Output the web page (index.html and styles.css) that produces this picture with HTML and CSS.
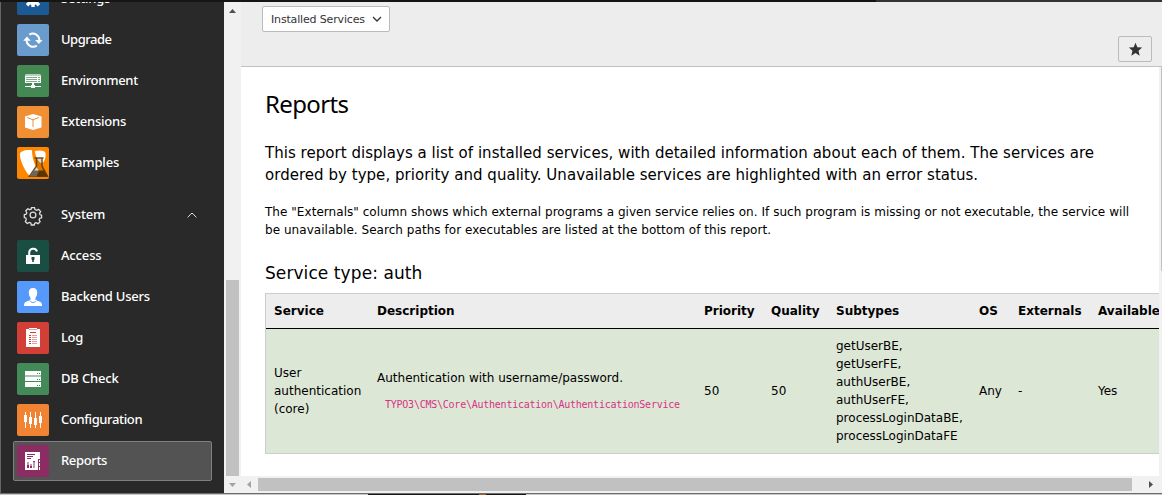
FILE: index.html
```html
<!DOCTYPE html>
<html lang="en">
<head>
<meta charset="utf-8">
<title>Reports</title>
<link rel="stylesheet" href="styles.css">
</head>
<body>
<div class="app">
  <div class="topstrip"><span></span></div>
  <div class="frame">
    <nav class="menu">
      <a class="item"><svg class="icon" style="background:#1b5a95" viewBox="0 0 32 32"><g fill="#fff"><circle cx="16" cy="16.500" r="5.600"/><path d="M14.300 8h3.400v16h-3.400zM8 14.800h16v3.400H8zM11.400 9.300l11.800 11.800-2.400 2.400L9 11.700zM20.600 9.300l2.400 2.400L11.200 23.500l-2.400-2.400z"/></g><circle cx="16" cy="16" r="2.500" fill="#1b5a95"/></svg><span class="t-settings">Settings</span></a>
      <a class="item"><svg class="icon" style="background:#6a9bcd" viewBox="0 0 32 32"><g fill="none" stroke="#fff" stroke-width="2"><path d="M12.300 10.600A6.600 6.600 0 0 1 22.400 16"/><path d="M19.800 21.700A6.600 6.600 0 0 1 9.600 16.500"/></g><path d="M18 16h7.600l-3.800 4zM6.200 16.800h7.600l-3.800-4.200z" fill="#fff"/></svg><span class="t-upgrade">Upgrade</span></a>
      <a class="item"><svg class="icon" style="background:#448854" viewBox="0 0 32 32"><path d="M9 9h14l1 1v1H8v-1z" fill="#b4cfba"/><path d="M8 11h16v7H8zM15 18h2v2h1v1h6v1h-6v1h-4v-1H8v-1h6v-1h1z" fill="#fff"/><path d="M9 12.500h11M9 14.500h11M9 16.500h11M21 12.500h2M21 14.500h2M21 16.500h2" stroke="#448854" stroke-width=".7"/></svg><span class="t-environment">Environment</span></a>
      <a class="item"><svg class="icon" style="background:#f18f35" viewBox="0 0 32 32"><path d="M16 8l8.500 2.500v11L16 24l-8-2.500v-11z" fill="#fff"/><path d="M10 11.500l6 2.300 6-2.300M16 13.800V21" fill="none" stroke="#f18f35"/></svg><span class="t-extensions">Extensions</span></a>
      <a class="item"><svg class="icon" style="background:#ff8700" viewBox="0 0 32 32"><path d="M5 4.500C8 3 12 2.700 15 3.300c0 8 3 16 6.500 19.500-1 3-5 6.700-7 6.700C10 29 3 14 3 8c0-2 .5-3 2-3.500z" fill="#fff"/><path d="M18 4c4-1 10-.8 10.500 2 .7 5-1.500 10-4 10-3 0-6.500-7-6.500-12z" fill="#fff"/><path d="M19.500 11h5v8l6 10H12.500l7-10z" fill="#593500" fill-opacity=".2"/><path d="M17.500 11h9M19.500 11v8L12.500 29.200h18l-5.500-10V11" fill="none" stroke="#593500" stroke-opacity=".85" stroke-width="1.500"/><path d="M16.500 23.500H22l-1.500 6h-8z" fill="#6e6659"/><path d="M22 23.500h5l3.500 6h-11z" fill="#593500"/></svg><span class="t-examples">Examples</span></a>
      <a class="item group"><svg class="icon" viewBox="0 0 32 32" fill="none" stroke="#ddd" stroke-width="1.300"><circle cx="16" cy="16" r="2.900"/><path d="M14.500 8.600h3l.5 2 1.500.7 2-1 2.100 2.200-1.100 1.900.6 1.400 1.500.4v2.600l-1.900.6-.6 1.500 1 1.800-2 2-1.900-1-1.500.6-.5 1.700h-2.900l-.5-1.900-1.500-.6-2 1-2-2 1-2-.5-1.500-1.500-.5v-2.800l1.900-.5.6-1.500-1-2 2-2 2 1 1.500-.6z"/></svg><span class="t-system">System</span><svg class="chevron" viewBox="0 0 10 6"><path d="M.6 5.300 5 1l4.400 4.300" fill="none" stroke="#ddd"/></svg></a>
      <a class="item"><svg class="icon" style="background:#194e42" viewBox="0 0 32 32"><path d="M12.200 15v-2.500a4 4 0 0 1 7.800-1" fill="none" stroke="#fff" stroke-width="2"/><path d="M9 15h14v9H9z" fill="#fff"/><path d="M14.500 17h3v2.500l-.7.500v2h-1.600v-2l-.7-.5z" fill="#194e42"/></svg><span class="t-access">Access</span></a>
      <a class="item"><svg class="icon" style="background:#5599fc" viewBox="0 0 32 32"><path d="M16 7c3 0 4.500 2 4.200 5-.1 2-.8 3.500-1.700 4.500V19l5 2c1 .4 1.500 2 1.500 4H7c0-2 .5-3.600 1.500-4l5-2v-2.500c-.9-1-1.600-2.500-1.700-4.500C11.500 9 13 7 16 7z" fill="#fff"/><path d="M13.200 20c1 2 4.600 2 5.600 0" fill="none" stroke="#5599fc" stroke-width="1"/></svg><span class="t-users">Backend Users</span></a>
      <a class="item"><svg class="icon" style="background:#d13f37" viewBox="0 0 32 32"><path d="M9 7h3V6h8v1h3v18H9z" fill="#fff"/><path d="M12 7.500h8" stroke="#e99d98"/><path d="M13 10.500h6" stroke="#d13f37"/><path d="M12 13.500h2m-2 2h2m-2 2h2m-2 2h2m-2 2h2" stroke="#d13f37"/><path d="M15 13.500h5m-5 2h5m-5 2h5m-5 2h5m-5 2h5" stroke="#e99d98"/></svg><span class="t-log">Log</span></a>
      <a class="item"><svg class="icon" style="background:#448a59" viewBox="0 0 32 32"><path d="M8 8h16v4.500H8zM8 13.500h16V18H8zM8 19h16v5H8z" fill="#fff"/><path d="M20 10.500h1m1 0h1M20 16.500h1m1 0h1M20 22.500h1m1 0h1" stroke="#448a59"/></svg><span class="t-db">DB Check</span></a>
      <a class="item"><svg class="icon" style="background:#f08433" viewBox="0 0 32 32"><path d="M8.500 8v16M13.500 8v16M18.500 8v16M23.500 8v16" stroke="#fff"/><path d="M7 11h3v7H7zM12 13h3v7h-3zM17 14h3v7h-3zM22 12h3v7h-3z" fill="#fff"/></svg><span class="t-config">Configuration</span></a>
      <a class="item active"><svg class="icon" style="background:#8b2d62" viewBox="0 0 32 32"><path d="M8 7h15v7h-2v11H8zM22 15h1v2h-1zM22 18h1v3h-1zM22 22h1v3h-1z" fill="#fff"/><path d="M10 9.500h8m-8 2h6m-6 2h4" stroke="#8b2d62"/><path d="M10 17h2v6h-2zM13 19h2v4h-2zM16 17h2v6h-2z" fill="#c999b3"/><path d="M10 20h2v3h-2zM13 21h2v2h-2zM16 16h2v1h-2z" fill="#8b2d62"/></svg><span class="t-reports">Reports</span></a>
    </nav>
    <div class="vscroll">
      <svg class="arrow" viewBox="0 0 17 17"><path d="M5 11h7L8.500 7z" fill="#505050"/></svg>
      <div class="thumb"></div>
      <svg class="arrow" viewBox="0 0 17 17"><path d="M5 7h7l-3.500 4z" fill="#a3a3a3"/></svg>
    </div>
    <main class="main">
      <div class="view">
        <header class="docheader">
          <div class="select"><span>Installed Services</span><svg viewBox="0 0 10 6"><path d="M1 1l4 4 4-4" fill="none" stroke="#333" stroke-width="1.300"/></svg></div>
          <div class="star"><svg viewBox="0 0 14 14"><path d="M7 .8l1.700 4.100 4.500.3-3.400 2.900 1.100 4.700L7 10.300l-3.900 2.500 1.100-4.700L.8 5.200l4.500-.3z" fill="#333"/></svg></div>
        </header>
        <div class="body">
          <section class="content">
            <h1>Reports</h1>
            <p class="lead">This report displays a list of installed services, with detailed information about each of them. The services are<br>ordered by type, priority and quality. Unavailable services are highlighted with an error status.</p>
            <p class="note">The "Externals" column shows which external programs a given service relies on. If such program is missing or not executable, the service will<br>be unavailable. Search paths for executables are listed at the bottom of this report.</p>
            <h2>Service type: auth</h2>
            <table>
              <colgroup><col class="c1"><col class="c2"><col class="c3"><col class="c4"><col class="c5"><col class="c6"><col class="c7"><col class="c8"></colgroup>
              <thead><tr><th>Service</th><th>Description</th><th>Priority</th><th>Quality</th><th>Subtypes</th><th>OS</th><th>Externals</th><th>Available</th></tr></thead>
              <tbody><tr><td>User<br>authentication<br>(core)</td><td><div>Authentication with username/password.</div><code>TYPO3\CMS\Core\Authentication\AuthenticationService</code></td><td>50</td><td>50</td><td>getUserBE,<br>getUserFE,<br>authUserBE,<br>authUserFE,<br>processLoginDataBE,<br>processLoginDataFE</td><td>Any</td><td>-</td><td>Yes</td></tr></tbody>
            </table>
          </section>
          <div class="edge"><span></span></div>
        </div>
      </div>
      <div class="hscroll">
        <svg class="arrow" viewBox="0 0 17 17"><path d="M10 5v7L6 8.500z" fill="#a3a3a3"/></svg>
        <div class="hthumb"></div>
        <svg class="arrow" viewBox="0 0 17 17"><path d="M7 5v7l4-3.500z" fill="#505050"/></svg>
      </div>
    </main>
  </div>
  <div class="bottomstrip"><span class="dark"><i></i></span></div>
</div>
</body>
</html>
```
FILE: styles.css
```css
* { box-sizing: border-box; }
body { margin: 0; background: #fff; color: #000; font: 12px/18px Verdana, "DejaVu Sans", sans-serif; }
.app { display: flex; flex-direction: column; width: 1162px; height: 495px; overflow: hidden; }
.topstrip { height: 2px; background: #151515; display: flex; justify-content: flex-end; }
.topstrip span { width: 286px; background: #333; }
.frame { display: flex; height: 491px; border-left: 1px solid #666; }
.menu { width: 223px; background: #292929; overflow: hidden; padding: 0 12px; }
.item { display: flex; align-items: center; height: 40px; margin-bottom: 1px; padding-left: 3px; border: 1px solid transparent; border-radius: 2px; color: #fff; white-space: nowrap; }
.item:first-child { margin-top: -23px; }
.item.group { margin-top: 12px; }
.item.active { background: #535353; border-color: #808080; }
.icon { width: 32px; height: 32px; border-radius: 2px; margin-right: 12px; flex: none; }
.chevron { width: 10px; height: 6px; margin-left: auto; margin-right: 14px; }
.item span { font-family: "Noto Sans", sans-serif; font-size: 13px; font-weight: 500; padding-bottom: 2px; letter-spacing: -.15px; }
.item .t-upgrade { letter-spacing: -.5px; }
.item .t-environment { letter-spacing: -.28px; }
.item .t-extensions { letter-spacing: -.2px; }
.item .t-users { letter-spacing: -.23px; }
.item .t-config { letter-spacing: -.37px; }
.item .t-reports, .item .t-log { letter-spacing: -.35px; }
.vscroll { width: 17px; background: #f1f1f1; display: flex; flex-direction: column; }
.arrow { width: 17px; height: 17px; flex: none; display: block; }
.thumb { width: 13px; height: 196px; margin: auto 2px 0; background: #c1c1c1; }
.main { flex: 1; min-width: 0; display: flex; flex-direction: column; }
.view { height: 474px; display: flex; flex-direction: column; }
.docheader { height: 65px; background: #ededed; border-bottom: 1px solid #c1c1c1; display: flex; justify-content: space-between; padding: 4px 10px 4px 21px; }
.select { width: 128px; height: 26px; border: 1px solid #bbb; border-radius: 2px; background: #fefefe; display: flex; align-items: center; justify-content: space-between; padding: 0 7px 0 8px; color: #333; font-size: 11px; letter-spacing: -.16px; }
.select span { padding-top: 1px; }
.select svg { width: 10px; height: 6px; }
.star { align-self: flex-end; width: 34px; height: 26px; border: 1px solid #bbb; border-radius: 2px; display: flex; align-items: center; justify-content: center; }
.star svg { width: 15px; height: 15px; }
.body { flex: 1; display: flex; min-height: 0; }
.content { width: 918px; overflow: hidden; padding-left: 24px; }
.edge { width: 3px; background: #f1f1f1; display: flex; justify-content: flex-end; }
.edge span { width: 1px; height: 204px; background: #c1c1c1; }
h1 { margin: 21px 0 0; font: 400 24px/32px "Noto Sans", sans-serif; letter-spacing: -.65px; height: 32px; }
p { margin: 0; white-space: nowrap; }
.lead { margin-top: 22px; font-size: 15px; line-height: 22px; letter-spacing: .035px; }
.note { margin-top: 17px; letter-spacing: .044px; }
h2 { margin: 22px 0 0; font-size: 17px; font-weight: 400; line-height: 24px; letter-spacing: .08px; }
table { width: 940px; margin-top: 8px; table-layout: fixed; border-collapse: separate; border-spacing: 0; border: 1px solid #ccc; }
.c1 { width: 103px; } .c2 { width: 327px; } .c3 { width: 67px; } .c4 { width: 65px; }
.c5 { width: 143px; } .c6 { width: 39px; } .c7 { width: 80px; }
th, td { padding: 0 0 0 8px; text-align: left; white-space: nowrap; }
th { height: 35px; background: #ededed; border-bottom: 1px solid #000; }
td { height: 124px; background: #dde7d6; vertical-align: middle; }
code { display: block; padding-left: 8px; margin-top: 9px; color: #d63384; font: 10px/18px "DejaVu Sans Mono", monospace; letter-spacing: -.24px; }
.hscroll { height: 17px; background: #f1f1f1; display: flex; align-items: center; }
.hthumb { width: 874px; height: 13px; background: #c1c1c1; }
.hscroll .arrow:last-child { margin-left: 10px; }
.bottomstrip { height: 2px; background: #c8c8c8; border-top: 1px solid #6c6c6c; }
.dark { display: block; width: 158px; height: 1px; margin-left: 368px; background: #181818; }
.dark i { display: block; width: 7px; height: 1px; margin-left: 111px; background: #ad5c20; float: left; }
```
